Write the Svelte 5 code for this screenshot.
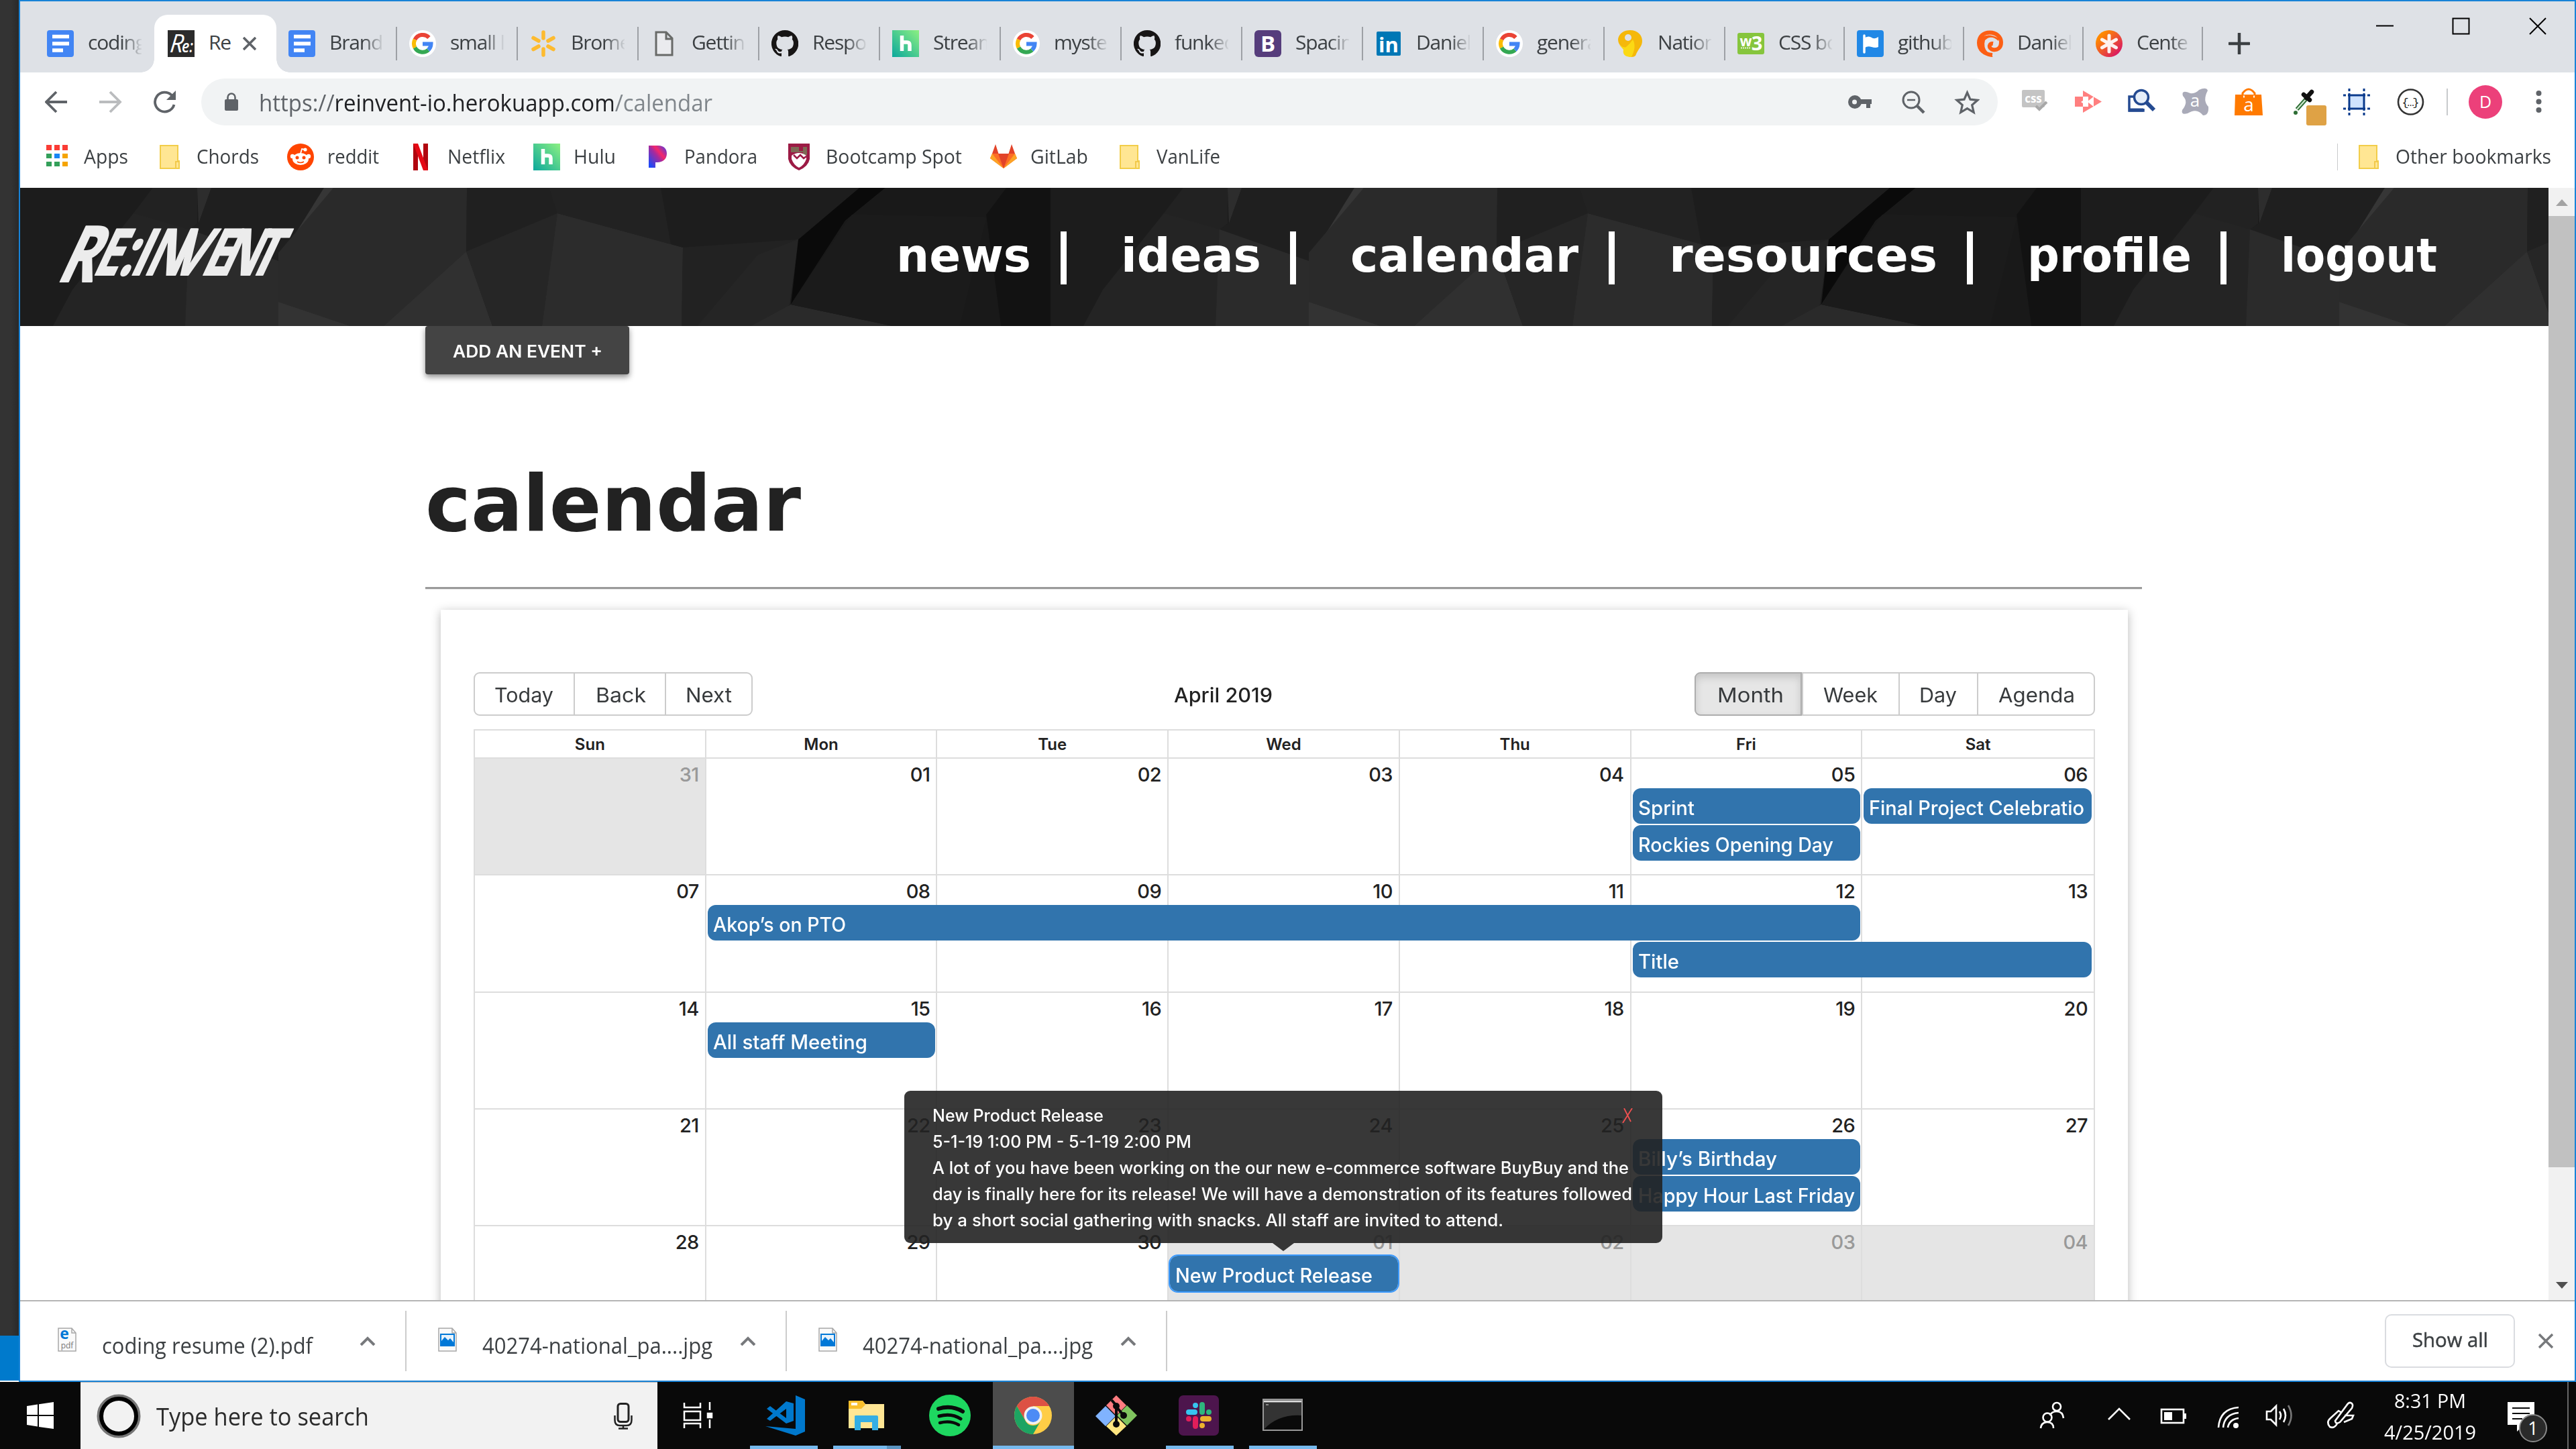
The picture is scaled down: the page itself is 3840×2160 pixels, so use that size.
<script>
  const tabs = [
    { icon: 'docs', label: 'coding', w: 200, kind: 'first' },
    { icon: 're', label: 'Re', w: 182, kind: 'active' },
    { icon: 'docs', label: 'Brand', w: 180, kind: '' },
    { icon: 'google', label: 'small l', w: 180, kind: '' },
    { icon: 'spark', label: 'Brome', w: 180, kind: '' },
    { icon: 'page', label: 'Gettin', w: 180, kind: '' },
    { icon: 'github', label: 'Respo', w: 180, kind: '' },
    { icon: 'hulu', label: 'Stream', w: 180, kind: '' },
    { icon: 'google', label: 'myste', w: 180, kind: '' },
    { icon: 'github', label: 'funked', w: 180, kind: '' },
    { icon: 'bootstrap', label: 'Spacin', w: 180, kind: '' },
    { icon: 'linkedin', label: 'Daniel', w: 180, kind: '' },
    { icon: 'google', label: 'genera', w: 180, kind: '' },
    { icon: 'pin', label: 'Nation', w: 180, kind: '' },
    { icon: 'w3', label: 'CSS bo', w: 178, kind: '' },
    { icon: 'flag', label: 'github', w: 178, kind: '' },
    { icon: 'swirl', label: 'Daniel', w: 178, kind: '' },
    { icon: 'aster', label: 'Cente', w: 178, kind: '' }
  ];
  const bookmarks = [
    { icon: 'apps', label: 'Apps', w: 66 },
    { icon: 'folder', label: 'Chords', w: 93 },
    { icon: 'reddit', label: 'reddit', w: 77 },
    { icon: 'netflix', label: 'Netflix', w: 86 },
    { icon: 'hulu', label: 'Hulu', w: 63 },
    { icon: 'pandora', label: 'Pandora', w: 109 },
    { icon: 'shield', label: 'Bootcamp Spot', w: 203 },
    { icon: 'gitlab', label: 'GitLab', w: 86 },
    { icon: 'folder', label: 'VanLife', w: 95 }
  ];
  const nav = [
    { label: 'news', w: 201, gap: 44 },
    { label: 'ideas', w: 209, gap: 43 },
    { label: 'calendar', w: 340, gap: 45 },
    { label: 'resources', w: 400, gap: 44 },
    { label: 'profile', w: 245, gap: 43 },
    { label: 'logout', w: 233, gap: 0 }
  ];
  const leftButtons = [
    { label: 'Today', w: 147, t: 88 },
    { label: 'Back', w: 136, t: 75 },
    { label: 'Next', w: 129, t: 69 }
  ];
  const rightButtons = [
    { label: 'Month', w: 160, t: 99, active: true },
    { label: 'Week', w: 144, t: 81 },
    { label: 'Day', w: 117, t: 56 },
    { label: 'Agenda', w: 174, t: 114 }
  ];
  const dayNames = ['Sun', 'Mon', 'Tue', 'Wed', 'Thu', 'Fri', 'Sat'];
  const weeks = [
    {
      days: ['31', '01', '02', '03', '04', '05', '06'],
      off: [0],
      events: [
        { title: 'Sprint', w: 84, col: 6, span: 1, row: 2 },
        { title: 'Rockies Opening Day', w: 291, col: 6, span: 1, row: 3 },
        { title: 'Final Project Celebratio', w: 321, col: 7, span: 1, row: 2 }
      ]
    },
    {
      days: ['07', '08', '09', '10', '11', '12', '13'],
      off: [],
      events: [
        { title: 'Akop’s on PTO', w: 198, col: 2, span: 5, row: 2 },
        { title: 'Title', w: 61, col: 6, span: 2, row: 3 }
      ]
    },
    {
      days: ['14', '15', '16', '17', '18', '19', '20'],
      off: [],
      events: [{ title: 'All staff Meeting', w: 230, col: 2, span: 1, row: 2 }]
    },
    {
      days: ['21', '22', '23', '24', '25', '26', '27'],
      off: [],
      events: [
        { title: 'Billy’s Birthday', w: 207, col: 6, span: 1, row: 2 },
        { title: 'Happy Hour Last Friday', w: 323, col: 6, span: 1, row: 3 }
      ]
    },
    {
      days: ['28', '29', '30', '01', '02', '03', '04'],
      off: [3, 4, 5, 6],
      events: [{ title: 'New Product Release', w: 294, col: 4, span: 1, row: 2, focus: true }]
    }
  ];
  const note = [
    { text: 'New Product Release', w: 255 },
    { text: '5-1-19 1:00 PM - 5-1-19 2:00 PM', w: 386 },
    { text: 'A lot of you have been working on the our new e-commerce software BuyBuy and the', w: 1038 },
    { text: 'day is finally here for its release! We will have a demonstration of its features followed', w: 1043 },
    { text: 'by a short social gathering with snacks. All staff are invited to attend.', w: 851 }
  ];
  const downloads = [
    { icon: 'pdf', label: 'coding resume (2).pdf', w: 314 },
    { icon: 'img', label: '40274-national_pa....jpg', w: 343 },
    { icon: 'img', label: '40274-national_pa....jpg', w: 343 }
  ];

  // Scales a label horizontally so that it fills its slot.
  function fit(node, width) {
    const natural = node.getBoundingClientRect().width;
    node.style.transform = `scaleX(${width / natural})`;
  }
</script>

{#snippet label(text, w)}
  <span class="slot" style:width="{w}px"><span class="fit" use:fit={w}>{text}</span></span>
{/snippet}

{#snippet icon(name)}
  <svg class="ico" viewBox="0 0 40 40">
    {#if name === 'docs'}
      <rect width="40" height="40" rx="4" fill="#4285f4" />
      <path d="M8 9.500H33M8 20H33M8 30H24" stroke="#fff" stroke-width="5.500" />
    {:else if name === 're'}
      <rect width="40" height="40" fill="#2b2b2b" />
      <text x="2" y="33" class="script" textLength="20" lengthAdjust="spacingAndGlyphs" transform="skewX(-6) translate(4 0)">R</text>
      <text x="21" y="33" class="script small" textLength="17" lengthAdjust="spacingAndGlyphs">e:</text>
    {:else if name === 'google'}
      <circle cx="20" cy="20" r="20" fill="#fff" />
      <g fill="none" stroke-width="6">
        <path d="M29.500 11A13 13 0 0 0 8.500 14" stroke="#ea4335" />
        <path d="M8.500 14A13 13 0 0 0 8.500 26" stroke="#fbbc05" />
        <path d="M8.500 26A13 13 0 0 0 28.500 29.500" stroke="#34a853" />
        <path d="M28.500 29.500A13 13 0 0 0 32.500 20.500H20" stroke="#4285f4" />
      </g>
    {:else if name === 'spark'}
      <g stroke="#fdbb30" stroke-width="5.500" stroke-linecap="round">
        <path d="M20 3V12M20 28V37M5 11.500L13 16M27 24L35 28.500M35 11.500L27 16M13 24L5 28.500" />
      </g>
    {:else if name === 'page'}
      <path d="M8 3H23L32 12V37H8V3Z M23 3V13H32" fill="#f5f5f5" fill-opacity=".5" stroke="#686a68" stroke-width="3" />
    {:else if name === 'github'}
      <path fill="#171515" d="M20 0a20 20 0 0 0-6.300 39c1 .2 1.300-.4 1.300-1v-3.700c-5.500 1.200-6.700-2.400-6.700-2.400-.9-2.300-2.200-2.900-2.200-2.900-1.800-1.200.1-1.200.1-1.200 2 .1 3.100 2.100 3.100 2.100 1.800 3 4.700 2.200 5.800 1.600.2-1.300.7-2.200 1.300-2.700-4.400-.5-9.100-2.200-9.100-9.900 0-2.200.8-4 2.100-5.400-.2-.5-.9-2.500.2-5.300 0 0 1.700-.5 5.500 2.100a19 19 0 0 1 10 0c3.800-2.600 5.500-2.100 5.500-2.100 1.100 2.800.4 4.800.2 5.300a7.800 7.800 0 0 1 2.100 5.400c0 7.700-4.700 9.400-9.200 9.900.8.600 1.400 1.800 1.400 3.700V38c0 .6.300 1.200 1.400 1A20 20 0 0 0 20 0z" />
    {:else if name === 'hulu'}
      <defs><linearGradient id="hu" x1="1" y1="0" x2="0" y2="1"><stop offset="0" stop-color="#8cf082" /><stop offset="1" stop-color="#0ba89c" /></linearGradient></defs>
      <rect width="40" height="40" fill="url(#hu)" />
      <path d="M14.500 8V31M14.500 21Q14.500 18 18 18H22Q26 18 26 22V31" fill="none" stroke="#fff" stroke-width="5.500" />
    {:else if name === 'bootstrap'}
      <rect width="40" height="40" rx="6" fill="#563d7c" />
      <text x="20" y="32" class="g b c" font-size="33">B</text>
    {:else if name === 'linkedin'}
      <rect x="2" y="2" width="36" height="36" rx="2" fill="#0077b5" />
      <text x="20" y="32.500" class="g b c" font-size="31">in</text>
    {:else if name === 'pin'}
      <path d="M20 0C31 0 38 7 38 16C38 25 32 27 28 38Q24 42 14 38C12 34 14 30 12 27C5 24 2 20 2 13C4 4 11 0 20 0Z" fill="#f5b80a" />
      <path d="M4 22Q11 27 14 25Q20 20 24 14Q30 24 22 40Q8 40 10 29Z" fill="#fbd914" />
      <circle cx="17" cy="11" r="5" fill="#dee1e6" />
    {:else if name === 'w3'}
      <rect y="4" width="40" height="32" rx="3" fill="#86c53d" />
      <text x="12.500" y="24" class="g b c" font-size="21">w</text>
      <text x="29" y="30" class="g b c" font-size="29">3</text>
      <path d="M5 26.500H20" stroke="#fff" stroke-width="1.500" stroke-dasharray="2 1" />
    {:else if name === 'flag'}
      <rect width="40" height="40" rx="4" fill="#2188e6" />
      <path d="M11 8V33" stroke="#fff" stroke-width="3.500" stroke-linecap="round" />
      <path d="M12 11Q18 8 22 11T32 10V25Q28 27 22 25T12 26Z" fill="#fff" />
    {:else if name === 'swirl'}
      <path d="M24 37C12 36 4 29 4 19C4 9 11 3.500 20 3.500C30 3.500 37 10 37 18C37 27 31 30 25 29C17 27 19 19 25 20" fill="none" stroke="#fc5f14" stroke-width="6" />
      <path d="M8 10Q20 4 33 12V16Q22 6 13 15Q10 26 17 33L25 40Q8 38 4 26Z" fill="#fc5f14" />
    {:else if name === 'aster'}
      <defs><linearGradient id="as" x1="0" y1="0" x2="1" y2="1"><stop offset=".2" stop-color="#ff8a00" /><stop offset=".85" stop-color="#da1b60" /></linearGradient></defs>
      <circle cx="20" cy="20" r="20" fill="url(#as)" />
      <path d="M20 8V32M9.500 14L30.500 26M30.500 14L9.500 26" stroke="#fff" stroke-opacity=".92" stroke-width="5" stroke-linecap="round" />
    {:else if name === 'apps'}
      <g>
        <path d="M4 2h8v8h-8zM16 2h8v8h-8zM28 2h8v8h-8z" fill="#fa3c35" />
        <path d="M4 15h8v7h-8zM4 27h8v7h-8zM16 27h8v7h-8z" fill="#34a05a" />
        <path d="M16 15h8v7h-8z" fill="#1a86f5" />
        <path d="M28 15h8v7h-8zM28 27h8v7h-8z" fill="#f5a400" />
      </g>
    {:else if name === 'folder'}
      <path d="M6 3H32V26H34V37H6Z" fill="#ffe693" stroke="#f2cd4a" stroke-width="2" />
      <path d="M29 36V27H34" fill="none" stroke="#f2c94c" stroke-width="2" />
    {:else if name === 'reddit'}
      <circle cx="20" cy="20" r="20" fill="#ff4500" />
      <ellipse cx="20" cy="23" rx="12" ry="9" fill="#fff" />
      <circle cx="8" cy="19" r="3.200" fill="#fff" /><circle cx="32" cy="19" r="3.200" fill="#fff" /><circle cx="27" cy="9" r="2.600" fill="#fff" />
      <path d="M20 15L22 8L27 9" fill="none" stroke="#fff" stroke-width="1.800" />
      <circle cx="15" cy="21" r="2.500" fill="#ff4500" /><circle cx="25" cy="21" r="2.500" fill="#ff4500" />
      <path d="M15 27Q20 30 25 27" fill="none" stroke="#ff4500" stroke-width="1.600" />
    {:else if name === 'netflix'}
      <path d="M9 0H16V40H9ZM24 0H31V40H24Z" fill="#b1060f" /><path d="M9 0H16L31 40H24Z" fill="#e50914" />
    {:else if name === 'pandora'}
      <defs><linearGradient id="pa" x1="0" y1="1" x2="1" y2="0"><stop offset=".1" stop-color="#2148f5" /><stop offset=".5" stop-color="#a62a9d" /><stop offset=".65" stop-color="#f5276a" /><stop offset="1" stop-color="#3a3df0" /></linearGradient></defs>
      <path d="M7 3H21C30 3 34 8 34 15C34 23 28 28 20 28H17V36H7Z" fill="url(#pa)" />
    {:else if name === 'shield'}
      <path d="M4 0H36V23Q34 34 20 40Q6 34 4 23Z" fill="#9c1b45" />
      <path d="M8 5H20V11H26V5H32V17H26V13H8Z" fill="#7d6a55" />
      <path d="M9 18Q20 10 31 18V23Q28 32 20 36Q12 32 9 23Z" fill="#fff" /><path d="M12 17L17 22L22 17L27 22L31 19" stroke="#9c1b45" stroke-width="2.500" fill="none" />
    {:else if name === 'gitlab'}
      <path d="M20 37L0 22L3 15H37L40 22Z" fill="#fc6d26" /><path d="M20 37L12 15H28Z" fill="#e24329" /><path d="M3 15L8 1L12.500 15ZM37 15L32 1L27.500 15Z" fill="#e24329" /><path d="M20 37L0 22L3 15ZM20 37L40 22L37 15Z" fill="#fca326" />
    {/if}
  </svg>
{/snippet}

{#snippet buttons(list)}
  <div class="group">
    {#each list as b}
      <button class:on={b.active} style:width="{b.w}px">{@render label(b.label, b.t)}</button>
    {/each}
  </div>
{/snippet}

<div class="screen">
  <div class="desk">
    <div class="behind"><div class="dark"></div><div class="blue"></div></div>
    <div class="window">
      <div class="tabstrip">
        {#each tabs as t}
          <div class="tab {t.kind}" style:width="{t.w}px">
            {@render icon(t.icon)}
            <span class="tabtext">{t.label}</span>
            {#if t.kind === 'active'}
              <svg class="tabclose" viewBox="0 0 20 20"><path d="M1 1L19 19M19 1L1 19" stroke="#5f6368" stroke-width="3.600" /></svg>
            {:else if t.kind === ''}
              <i class="tabsep"></i>
            {/if}
          </div>
        {/each}
        <svg class="plus" viewBox="0 0 32 32"><path d="M16 1V31M1 16H31" stroke="#3c4043" stroke-width="4.500" stroke-linecap="round" /></svg>
        <svg class="wincontrols" viewBox="0 0 254 26">
          <path d="M0 12.500H26M114.500 1.500H138.500V24.500H114.500ZM229 1L253 25M253 1L229 25" fill="none" stroke="#000" stroke-width="2" />
        </svg>
      </div>

      <div class="toolbar">
        <svg class="navicons" viewBox="0 0 196 36" fill="none" stroke-width="3.800">
          <path d="M33 18H3M17 3L2 18L17 33" stroke="#5f6368" />
          <path d="M81 18H111M97 3L112 18L97 33" stroke="#babcbe" />
          <path d="M189 8A14.500 14.500 0 1 0 192.500 22" stroke="#5f6368" />
          <path d="M195 1V15H181Z" fill="#5f6368" />
        </svg>
        <div class="omnibox">
          <svg class="lock" viewBox="0 0 20 28"><rect y="10" width="20" height="17" rx="2" fill="#5f6368" /><path d="M4.500 11V7A5.500 5.500 0 0 1 15.500 7V11" fill="none" stroke="#5f6368" stroke-width="2.600" /></svg>
          <span class="slot url" style:width="676px"><span class="fit" use:fit={676}><span class="scheme">https://</span>reinvent-io.herokuapp.com<span class="path">/calendar</span></span></span>
          <svg class="omniicons" viewBox="0 0 196 40">
            <g fill="#5f6368"><circle cx="10" cy="20" r="10" /><rect x="17" y="16" width="18" height="7" /><rect x="27" y="20" width="6" height="9" /></g><circle cx="9.500" cy="20" r="3.500" fill="#f1f3f4" />
            <g fill="none" stroke="#5f6368" stroke-width="3"><circle cx="94" cy="17" r="12" /><path d="M103 26L113 36" stroke-width="4.500" /><path d="M88 17H100" stroke-width="2.500" /></g>
            <path d="M177.500 6L182 16.200L193 17.300L184.700 24.600L187.200 35.500L177.500 29.700L167.800 35.500L170.300 24.600L162 17.300L173 16.200Z" fill="none" stroke="#5f6368" stroke-width="3.200" />
          </svg>
        </div>
        <svg class="exts" viewBox="0 0 790 60">
          <g><rect x="1" y="12" width="34" height="26" rx="2" fill="#c4c4c4" /><text x="18" y="31" class="g b c" font-size="17">css</text><path d="M22 36L27 41L38 30" stroke="#a8a8a8" stroke-width="4" fill="none" /></g>
          <g><path d="M92 13L120 29.500L92 46V37H80V22H92Z" fill="#ff7f7f" /><path d="M92 22H100V37H92V32L89 30L92 28Z" fill="#fff" /><path d="M99 29L108 22V37L99 30Z" fill="#fff" /></g>
          <g fill="none" stroke="#244a91" stroke-width="3.500"><path d="M170 22H161V43H182V40" /><path d="M160 42H182" stroke-width="5" /><circle cx="179" cy="23" r="10.500" fill="#e6eef9" /><path d="M187 31L198 42" stroke-width="6" /></g>
          <g><path d="M265 12Q276 7 278 13Q270 28 279 37Q280 50 271 50Q262 38 248 47Q238 50 240 42Q250 30 241 21Q238 11 252 17Q260 18 265 12Z" fill="#a9aab8" /><text x="259" y="37" class="g c" font-size="26">a</text></g>
          <g><path d="M319 19H358L360 50H318Z" fill="#ff7a00" /><path d="M330 24V17Q339 5 348 17V24" fill="none" stroke="#ff7a00" stroke-width="3" /><path d="M331 22h2M346 22h2" stroke="#fff" stroke-width="3" /><text x="339" y="44" class="g c" font-size="28">a</text></g>
          <g><path d="M411 41L427 23" stroke="#2e6e35" stroke-width="6" /><path d="M411 41L427 23" stroke="#cfe8cf" stroke-width="2" /><path d="M421 19L430 27M425 24L433 15" stroke="#111" stroke-width="6.500" stroke-linecap="round" /><circle cx="409" cy="46" r="3" fill="#2e6e35" /><rect x="425" y="35" width="30" height="30" rx="3" fill="#dfa245" /></g>
          <g fill="none" stroke="#0a3a8c" stroke-width="3"><rect x="489" y="20" width="22" height="20" fill="#cfe3ff" stroke="none" /><path d="M480 20H520M480 40H520" stroke-dasharray="4 3 26 3 4 0" /><path d="M489 10V50M511 10V50" stroke-dasharray="4 3 26 3 4 0" /></g>
          <g><circle cx="580.500" cy="30" r="18.500" fill="#fff" stroke="#333" stroke-width="2.600" /><text x="580.500" y="36" class="c" font-size="17" font-family="Liberation Mono" fill="#222" textLength="26">{'{…}'}</text></g>
          <path d="M635 10V50" stroke="#c8cacc" stroke-width="2" />
          <circle cx="692" cy="30" r="25" fill="#ec407a" /><text x="692" y="39" class="g c" font-size="25">D</text>
          <g fill="#5f6368"><circle cx="771.500" cy="17" r="4" /><circle cx="771.500" cy="29.500" r="4" /><circle cx="771.500" cy="42" r="4" /></g>
        </svg>
      </div>

      <div class="bookmarks">
        {#each bookmarks as b}
          <div class="bm">{@render icon(b.icon)}{@render label(b.label, b.w)}</div>
        {/each}
        <i class="bmsep"></i>
        <div class="bm">{@render icon('folder')}{@render label('Other bookmarks', 232)}</div>
      </div>

      <div class="viewport">
        <div class="page">
          <header>
            <svg class="poly" viewBox="0 0 3769 206" preserveAspectRatio="none">
              <defs>
                <pattern id="facets" width="1536" height="206" patternUnits="userSpaceOnUse">
                  <rect width="1536" height="206" fill="#1c1c1c" />
                  <path d="M198 0H264V53L252 62L169 38Z" fill="#222" />
                  <path d="M264 0H285L266 53Z" fill="#2d2d2d" />
                  <path d="M285 0H453L385 109L252 62L266 53Z" fill="#1f1f1f" />
                  <path d="M78 152L169 38L252 62L246 206H49Z" fill="#242424" />
                  <path d="M252 62L385 109V206H246Z" fill="#2b2b2b" />
                  <path d="M453 0H467L422 69L385 109Z" fill="#363636" />
                  <path d="M467 0H666L665 95L542 206H492L385 170V97Z" fill="#2a2a2a" />
                  <path d="M385 170L492 206H385Z" fill="#333" />
                  <path d="M665 95L704 206H542Z" fill="#303030" />
                  <path d="M666 0H789L801 38L665 95Z" fill="#202020" />
                  <path d="M801 38L778 206H704L665 95Z" fill="#262626" />
                  <path d="M801 38L988 89L986 206H778Z" fill="#2c2c2c" />
                  <path d="M789 0H955L970 84L801 38Z" fill="#222" />
                  <path d="M955 0H1251L1160 77L988 89L970 84Z" fill="#1d1d1d" />
                  <path d="M988 89L1160 77L1147 174L1114 206H986Z" fill="#222" />
                  <path d="M1100 100L1160 77L1147 174L1114 206H1010Z" fill="#252525" />
                  <path d="M1251 0H1290L1230 49L1149 174L1160 77Z" fill="#0a0a0a" />
                  <path d="M1149 174L1300 206H1090Z" fill="#2a2a2a" />
                  <path d="M1290 0H1536V206H1300L1149 174L1230 49Z" fill="#191919" />
                  <path d="M1240 40L1440 44L1400 206H1300L1149 174Z" fill="#1b1b1b" />
                  <path d="M1470 0H1536V206H1462L1440 40Z" fill="#121212" />
                </pattern>
              </defs>
              <rect width="3769" height="206" fill="url(#facets)" />
            </svg>
            <svg class="logo" viewBox="0 0 460 206">
              <g transform="translate(58 130) skewX(-25) scale(.72 1)">
                <text x="-2" y="10" font-size="116">R</text>
                <text x="66 120 143 172 229 290 326 387" y="0 0 0 0 0 0 0 0">E:INVENT</text>
              </g>
            </svg>
            <nav>
              {#each nav as n, i}
                <span class="navitem">
                  {@render label(n.label, n.w)}
                  {#if i < nav.length - 1}<i class="bar" style:margin-left="{n.gap}px"></i>{/if}
                </span>
              {/each}
            </nav>
          </header>

          <main>
            <button class="add">{@render label('ADD AN EVENT +', 223)}</button>
            <h1>{@render label('calendar', 560)}</h1>
            <hr />
            <section class="card">
              <div class="calbar">
                {@render buttons(leftButtons)}
                {@render label('April 2019', 147)}
                {@render buttons(rightButtons)}
              </div>
              <div class="month">
                <div class="daynames">
                  {#each dayNames as d}<span>{d}</span>{/each}
                </div>
                {#each weeks as week}
                  <div class="week">
                    {#each week.days as d, i}
                      <div class="day" class:off={week.off.includes(i)} class:last={i === 6} style:grid-column={i + 1}>{d}</div>
                    {/each}
                    {#each week.events as e}
                      <div class="event" class:focus={e.focus} style:grid-column="{e.col} / span {e.span}" style:grid-row={e.row}>
                        {@render label(e.title, e.w)}
                      </div>
                    {/each}
                  </div>
                {/each}
              </div>
            </section>
          </main>
          <div class="popup">
            {#each note as n}<div>{@render label(n.text, n.w)}</div>{/each}
            <svg class="popx" viewBox="0 0 16 22"><path d="M3 0L13 20M15 0L1 22" stroke="#f05050" stroke-width="1.800" /></svg>
            <i class="arrow"></i>
          </div>
        </div>
        <div class="scroll">
          <svg viewBox="0 0 40 42"><path d="M11 27L20 17L29 27Z" fill="#a3a3a3" /></svg>
          <div class="thumb"></div>
          <svg class="down" viewBox="0 0 40 42"><path d="M11 15L20 25L29 15Z" fill="#505050" /></svg>
        </div>
      </div>

      <div class="shelf">
        {#each downloads as d}
          <div class="dl">
            <svg class="file" viewBox="0 0 28 36">
              <path d="M1 1H21L27 8V35H1Z" fill="#fafafa" stroke="#a8a8a8" stroke-width="1.500" /><path d="M21 1V8H27" fill="none" stroke="#a8a8a8" stroke-width="1.500" />
              {#if d.icon === 'pdf'}
                <text x="10" y="17" class="b c" font-size="23" font-family="Open Sans" fill="#0078d7">e</text>
                <text x="14" y="31" class="c" font-size="12" font-family="Open Sans" fill="#777">pdf</text>
              {:else}
                <rect x="3" y="9" width="22" height="19" fill="#0078d7" /><rect x="5" y="11" width="18" height="15" fill="#e8f3fc" /><path d="M5 20L10 14L15 19L18 16L23 22V26H5Z" fill="#0078d7" />
              {/if}
            </svg>
            {@render label(d.label, d.w)}
            <svg class="chev" viewBox="0 0 24 14"><path d="M2 13L12 3L22 13" fill="none" stroke="#77797c" stroke-width="4" /></svg>
          </div>
        {/each}
        <button class="showall">{@render label('Show all', 113)}</button>
        <svg class="shelfx" viewBox="0 0 22 24"><path d="M1 2L21 22M21 2L1 22" stroke="#77797c" stroke-width="3.500" /></svg>
      </div>
    </div>
  </div>

  <footer>
    <div class="start"><svg viewBox="0 0 40 40"><path d="M0 6L16 3.500V19H0ZM18 3.200L40 0V19H18ZM0 21H16V36.500L0 34ZM18 21H40V40L18 37Z" fill="#fff" /></svg></div>
    <div class="search">
      <svg class="ring" viewBox="0 0 66 66"><circle cx="33" cy="33" r="30" fill="none" stroke="#777" stroke-width="5" /><circle cx="33" cy="33" r="26" fill="none" stroke="#000" stroke-width="6" /></svg>
      {@render label('Type here to search', 317)}
      <svg class="mic" viewBox="0 0 28 40"><rect x="6" y="1.500" width="16" height="27" rx="4" fill="none" stroke="#222" stroke-width="3" /><path d="M1.500 19V26Q1.500 34 9 34H19Q26.500 34 26.500 26V19M14 34V38M7 38.500H21" fill="none" stroke="#222" stroke-width="2.500" /></svg>
    </div>
    <svg class="apps" viewBox="0 0 1020 100">
      <g fill="none" stroke="#fff" stroke-width="2.500"><path d="M40 31V38H64V31M40 69V62H64V69M40 44H64V57H40ZM78 30V42M78 56V69" /><path d="M75 47H81V53H75Z" fill="#fff" /></g>
      <g fill="#0078cc"><path d="M206 20L220 26V74L206 80L161 66L206 70Z" /><path d="M192 29L203 32V58L192 62L163 40L168 36L192 54V40L168 58L163 55Z" /></g>
      <g><path d="M285 28H306L310 33H338V69H285Z" fill="#ffe694" /><path d="M285 28H306L310 34L304 40H285Z" fill="#f9bf2b" /><rect x="289" y="31" width="9" height="4" fill="#fff" /><path d="M294 72V51Q294 50 296 50H327Q329 50 329 52V72H320V60H303V72Z" fill="#35aee4" /></g>
      <g><circle cx="436" cy="50" r="31" fill="#1ed760" /><g fill="none" stroke="#0a0a0a" stroke-linecap="round"><path d="M419 40Q438 34 455 44" stroke-width="6" /><path d="M420 51Q438 46 452 55" stroke-width="5" /><path d="M421 61Q437 57 449 64" stroke-width="4.500" /></g></g>
      <rect x="500" width="121" height="100" fill="#4c4c4c" />
      <g><circle cx="560" cy="50" r="28" fill="#ffcd46" /><path d="M535.800 36A28 28 0 0 1 584.200 36H560L548 57Z" fill="#dd5144" /><path d="M535.800 36A28 28 0 0 0 560 78L572 57A13 13 0 0 1 548 57Z" fill="#1da462" /><circle cx="560" cy="50" r="13.500" fill="#f1f1f1" /><circle cx="560" cy="50" r="10" fill="#4c8bf5" /></g>
      <g><path d="M684 20L699 35L684 50L669 35Z" fill="#ff7c80" /><path d="M700 35L715 50L700 65L685 50Z" fill="#80c45f" /><path d="M668 36L683 51L668 66L653 51Z" fill="#80b3ff" /><path d="M684 51L699 66L684 80L669 66Z" fill="#ffe680" /><path d="M677 27L684 35V62M684 37L695 50" stroke="#0a0a0a" stroke-width="4" fill="none" /><circle cx="684" cy="36" r="5" fill="#0a0a0a" /><circle cx="695" cy="50" r="5" fill="#0a0a0a" /><circle cx="684" cy="63" r="5" fill="#0a0a0a" /></g>
      <g><rect x="777" y="20" width="60" height="60" rx="7" fill="#4d154d" /><g stroke-width="8" stroke-linecap="round"><path d="M792 45H801M802 35V35.100" stroke="#36c5f0" /><path d="M812 34V45M822 45V45.100" stroke="#2eb67d" /><path d="M813 55H822M812 65V65.100" stroke="#ecb22e" /><path d="M802 55V66M792 55V55.100" stroke="#e01e5a" /></g></g>
      <g><rect x="903" y="26" width="58" height="46" fill="#0a0a0a" stroke="#999" stroke-width="2" /><path d="M904 29H960" stroke="#ddd" stroke-width="3" /><path d="M904 31H960V50Q925 48 904 71Z" fill="#333" /><path d="M907 34H911" stroke="#aaa" stroke-width="1.500" /></g>
      <g fill="#76b9ed"><rect x="138" y="95" width="101" height="5" /><rect x="262" y="95" width="80" height="5" /><rect x="342" y="95" width="21" height="5" fill="#5a93c0" /><rect x="500" y="95" width="121" height="5" /><rect x="758" y="95" width="101" height="5" /><rect x="882" y="95" width="101" height="5" /></g>
    </svg>
    <svg class="tray" viewBox="0 0 480 100">
      <g fill="none" stroke="#fff" stroke-width="2.600">
        <circle cx="28" cy="37" r="6" /><path d="M18 50Q20 44 28 44Q37 44 38 54" /><circle cx="14" cy="53" r="6.500" /><path d="M4 69Q5 60 14 60Q23 60 23 69" />
        <path d="M105 56L121 40L137 56" />
        <rect x="184" y="41" width="33" height="20" /><path d="M219 47V55" stroke-width="4" />
        <path d="M269 68Q271 40 299 38M276 68Q278 48 299 46M283 68Q285 56 299 54" />
        <path d="M341 44H347L355 36V64L347 56H341Z" /><path d="M360 44Q364 50 360 56M366 40Q372 50 366 60" /><path d="M373 35Q382 50 373 65" stroke="#777" />
        <path d="M466 31Q471 33 468 39L450 60Q444 64 443 58L460 35Q463 30 466 31ZM453 46L448 43L436 54Q429 60 435 67Q442 70 446 62M457 50H470L468 55L456 60" />
      </g>
      <rect x="188" y="45" width="12" height="12" fill="#fff" /><circle cx="295" cy="65" r="4" fill="#fff" />
    </svg>
    <div class="clock">{@render label('8:31 PM', 107)}{@render label('4/25/2019', 137)}</div>
    <svg class="notif" viewBox="0 0 100 100"><path d="M0 30H40V64H24L14 74V64H0Z" fill="#fff" /><path d="M7 39H33M7 47H33M7 55H22" stroke="#0a0a0a" stroke-width="2" /><circle cx="38" cy="69" r="20" fill="#2a2a2a" stroke="#888" stroke-width="2" /><text x="38" y="79" class="g c" font-size="27">1</text><path d="M90 0V100" stroke="#666" stroke-width="2" /></svg>
  </footer>
</div>

<style>
  :global(body) { margin: 0; }
  * { box-sizing: border-box; }
  .screen { width: 3840px; height: 2160px; overflow: hidden; display: flex; flex-direction: column; font-family: "Open Sans", "Noto Sans", sans-serif; font-size: 30px; color: #3c4043; background: #fff; }
  svg { display: block; flex: none; }
  button { font: inherit; color: inherit; padding: 0; margin: 0; background: none; border: 0; display: flex; align-items: center; justify-content: center; }
  .slot { display: block; flex: none; white-space: nowrap; }
  .fit { display: inline-block; transform-origin: 0 50%; white-space: nowrap; }
  .g { font-family: "Open Sans", sans-serif; fill: #fff; }
  .b { font-weight: 700; }
  .c { text-anchor: middle; }
  .script { font: italic 400 38px "Open Sans", sans-serif; fill: #fff; }
  .small { font-size: 26px; font-weight: 600; }

  .desk { display: flex; height: 2060px; }
  .behind { width: 28px; display: flex; flex-direction: column; }
  .dark { height: 1991px; background: linear-gradient(90deg, #333 60%, #292929); }
  .blue { height: 67px; background: #007acc; }
  .window { width: 3812px; border: 2px solid #1883d7; display: flex; flex-direction: column; }

  .tabstrip { height: 106px; flex: none; background: #dee1e6; display: flex; align-items: flex-end; }
  .tab { flex: none; height: 86px; padding: 0 0 1px 18px; display: flex; align-items: center; position: relative; }
  .ico { width: 40px; height: 40px; }
  .tab.first { padding-left: 40px; }
  .tab.active { background: #fff; border-radius: 20px 20px 0 0; padding-left: 20px; }
  .tab.active::before, .tab.active::after { content: ""; position: absolute; bottom: 0; width: 20px; height: 20px; }
  .tab.active::before { left: -20px; background: radial-gradient(circle at 0 0, transparent 19.5px, #fff 20px); }
  .tab.active::after { right: -20px; background: radial-gradient(circle at 100% 0, transparent 19.5px, #fff 20px); }
  .tabtext { width: 80px; margin: -3px auto 0 21px; overflow: hidden; white-space: nowrap; letter-spacing: -1.2px; line-height: 44px; -webkit-mask-image: linear-gradient(90deg, #000 50px, transparent 82px); mask-image: linear-gradient(90deg, #000 50px, transparent 82px); }
  .active .tabtext { width: 34px; margin-right: 17px; -webkit-mask-image: none; mask-image: none; }
  .tabclose { width: 20px; height: 20px; margin-right: auto; }
  .tabsep { width: 2px; height: 50px; background: #9da0a5; flex: none; }
  .plus { width: 32px; height: 32px; margin: 0 188px 27px 38px; }
  .wincontrols { width: 254px; height: 26px; margin-bottom: 56px; }

  .toolbar { height: 90px; flex: none; display: flex; align-items: center; padding: 0 0 2px 37px; }
  .navicons { width: 196px; height: 36px; margin-right: 37px; }
  .omnibox { width: 2678px; height: 70px; border-radius: 35px; background: #f1f3f4; display: flex; align-items: center; padding-left: 35px; flex: none; }
  .lock { width: 20px; height: 28px; margin-right: 31px; }
  .url { font-size: 35px; color: #202124; line-height: 60px; padding-top: 1px; }
  .scheme { color: #5f6368; }
  .path { color: #80868b; }
  .omniicons { width: 196px; height: 40px; margin-left: auto; margin-right: 27px; }
  .exts { width: 790px; height: 60px; margin-left: 35px; overflow: visible; }

  .bookmarks { height: 82px; flex: none; display: flex; align-items: center; gap: 42px; padding: 0 35px 10px 35px; }
  .bm { display: flex; align-items: center; gap: 20px; height: 40px; }
  .bm .slot { margin-top: -4px; }
  .bmsep { width: 1px; height: 40px; background: #c8cacc; margin-left: auto; margin-right: -16px; }

  .viewport { height: 1660px; flex: none; display: flex; border-bottom: 2px solid #b4b4b4; overflow: hidden; }
  .page { width: 3769px; height: 1658px; overflow: hidden; position: relative; color: #222; font-family: Inter, sans-serif; font-weight: 500; }
  header { height: 206px; display: grid; grid-template: 206px / 1306px 1fr; align-items: center; }
  .poly { grid-area: 1 / 1 / 2 / 3; width: 3769px; height: 206px; }
  .logo { grid-area: 1 / 1; z-index: 1; width: 460px; height: 206px; font: 700 96px "Open Sans", sans-serif; fill: #ececec; stroke: #ececec; stroke-width: 2px; stroke-linejoin: round; }
  nav { grid-area: 1 / 2; z-index: 1; display: flex; gap: 81px; padding-bottom: 5px; font: 700 69px/90px "DejaVu Sans", sans-serif; color: #fff; }
  .navitem { display: flex; align-items: center; }
  .bar { width: 9px; height: 79px; background: #fff; margin-top: 7px; }

  main { width: 2559px; margin-left: 604px; }
  .add { width: 304px; height: 72px; background: #444; color: #fff; border-radius: 4px; box-shadow: 0 4px 8px rgba(0, 0, 0, .45); font-size: 26px; font-weight: 600; padding: 2px 2px 0 0; }
  h1 { margin: 123px 0 0 0; font: 700 115px/140px "DejaVu Sans", sans-serif; height: 140px; }
  hr { margin: 54px 0 31px; height: 4px; border: 0; border-top: 3px solid #9a9a9a; background: #eee; }
  .card { width: 2515px; height: 1100px; margin: -1px 0 0 23px; padding: 93px 49px 0; box-shadow: 0 3px 14px rgba(0, 0, 0, .28); background: #fff; }
  .calbar { display: flex; justify-content: space-between; align-items: center; height: 65px; margin-bottom: 20px; position: relative; }
  .calbar > .slot { margin: 3px 2px 0 0; }
  .group { display: flex; height: 65px; border: 2px solid #ccc; border-radius: 9px; color: #373a3c; font-weight: 400; }
  .group button { height: 61px; border-left: 2px solid #ccc; padding: 2px 2px 0 0; }
  .group button:first-child { border-left: 0; }
  .group .on { margin: -2px 0 -2px -2px; height: 65px; border: 2px solid #adadad !important; border-radius: 9px 0 0 9px; background: #e6e6e6; box-shadow: inset 0 6px 12px rgba(0, 0, 0, .14); }
  .month { border: 2px solid #ddd; width: 2417px; }
  .daynames { display: grid; grid-template-columns: repeat(7, 1fr); height: 40px; text-align: center; font-size: 24px; font-weight: 600; line-height: 42px; }
  .daynames span { border-right: 2px solid #ddd; }
  .daynames span:last-child { border-right: 0; }
  .week { height: 174.3px; display: grid; grid-template-columns: repeat(7, minmax(0, 1fr)); grid-template-rows: 42px 53px 53px 1fr; row-gap: 2px; border-top: 2px solid #ddd; }
  .day { grid-row: 1 / -1; text-align: right; padding-right: 9px; font-size: 29px; line-height: 47px; letter-spacing: -.6px; border-right: 2px solid #ddd; }
  .day.last { border-right: 0; }
  .off { background: #e5e5e5; color: #999; }
  .event { margin: 0 3px 0 2px; background: #3174ad; color: #fff; border-radius: 12px; padding: 4px 8px 0; line-height: 50px; font-size: 29.500px; height: 53px; overflow: hidden; z-index: 1; }
  .focus { outline: 2px solid #3b99fc; }

  .popup { position: absolute; z-index: 3; left: 1318px; top: 1346px; width: 1130px; height: 227px; padding: 18px 42px 14px; border-radius: 9px; background: rgba(34, 34, 34, .9); color: #fff; font-size: 25px; line-height: 39px; }
  .popx { position: absolute; right: 44px; top: 26px; width: 16px; height: 22px; }
  .arrow { position: absolute; left: 549px; top: 227px; border: 16px solid transparent; border-top: 12px solid rgba(34, 34, 34, .9); border-bottom: 0; }

  .scroll { width: 39px; background: #f1f1f1; display: flex; flex-direction: column; }
  .scroll svg { width: 40px; height: 42px; }
  .thumb { height: 1418px; background: #c1c1c1; flex: none; }
  .scroll .down { margin-top: auto; }

  .shelf { height: 118px; flex: none; display: flex; align-items: center; background: #fff; font-size: 33px; }
  .dl { width: 567px; height: 90px; display: flex; align-items: center; border-right: 2px solid #ccc; padding: 0 44px 0 47px; }
  .dl:first-child { width: 576px; padding-left: 56px; }
  .dl .slot { margin-left: 38px; margin-top: 12px; }
  .file { width: 28px; height: 36px; margin-top: -4px; }
  .chev { width: 24px; height: 14px; margin-left: auto; }
  .showall { width: 194px; height: 80px; border: 2px solid #dadce0; border-radius: 10px; margin-left: auto; font-size: 30px; padding-bottom: 5px; -webkit-text-stroke: .5px #3c4043; }
  .shelfx { width: 22px; height: 24px; margin: 0 32px 0 35px; }

  footer { height: 100px; background: #090909; display: flex; color: #fff; }
  .start { width: 120px; padding: 30px 40px; }
  .start svg { width: 40px; }
  .search { width: 860px; background: #f2f2f2; border-top: 1px solid #b4b4b4; color: #2b2b2b; display: flex; align-items: center; padding: 0 37px 0 24px; font-size: 37px; }
  .search .slot { margin: 0 auto 0 23px; }
  .ring { width: 66px; height: 66px; }
  .mic { width: 28px; height: 40px; }
  .apps { width: 1020px; height: 100px; }
  .tray { width: 480px; height: 100px; margin-left: 1038px; }
  .clock { width: 208px; display: flex; flex-direction: column; align-items: center; line-height: 47px; padding-top: 4px; flex: none; }
  .notif { width: 100px; height: 100px; margin-left: 12px; }
</style>
